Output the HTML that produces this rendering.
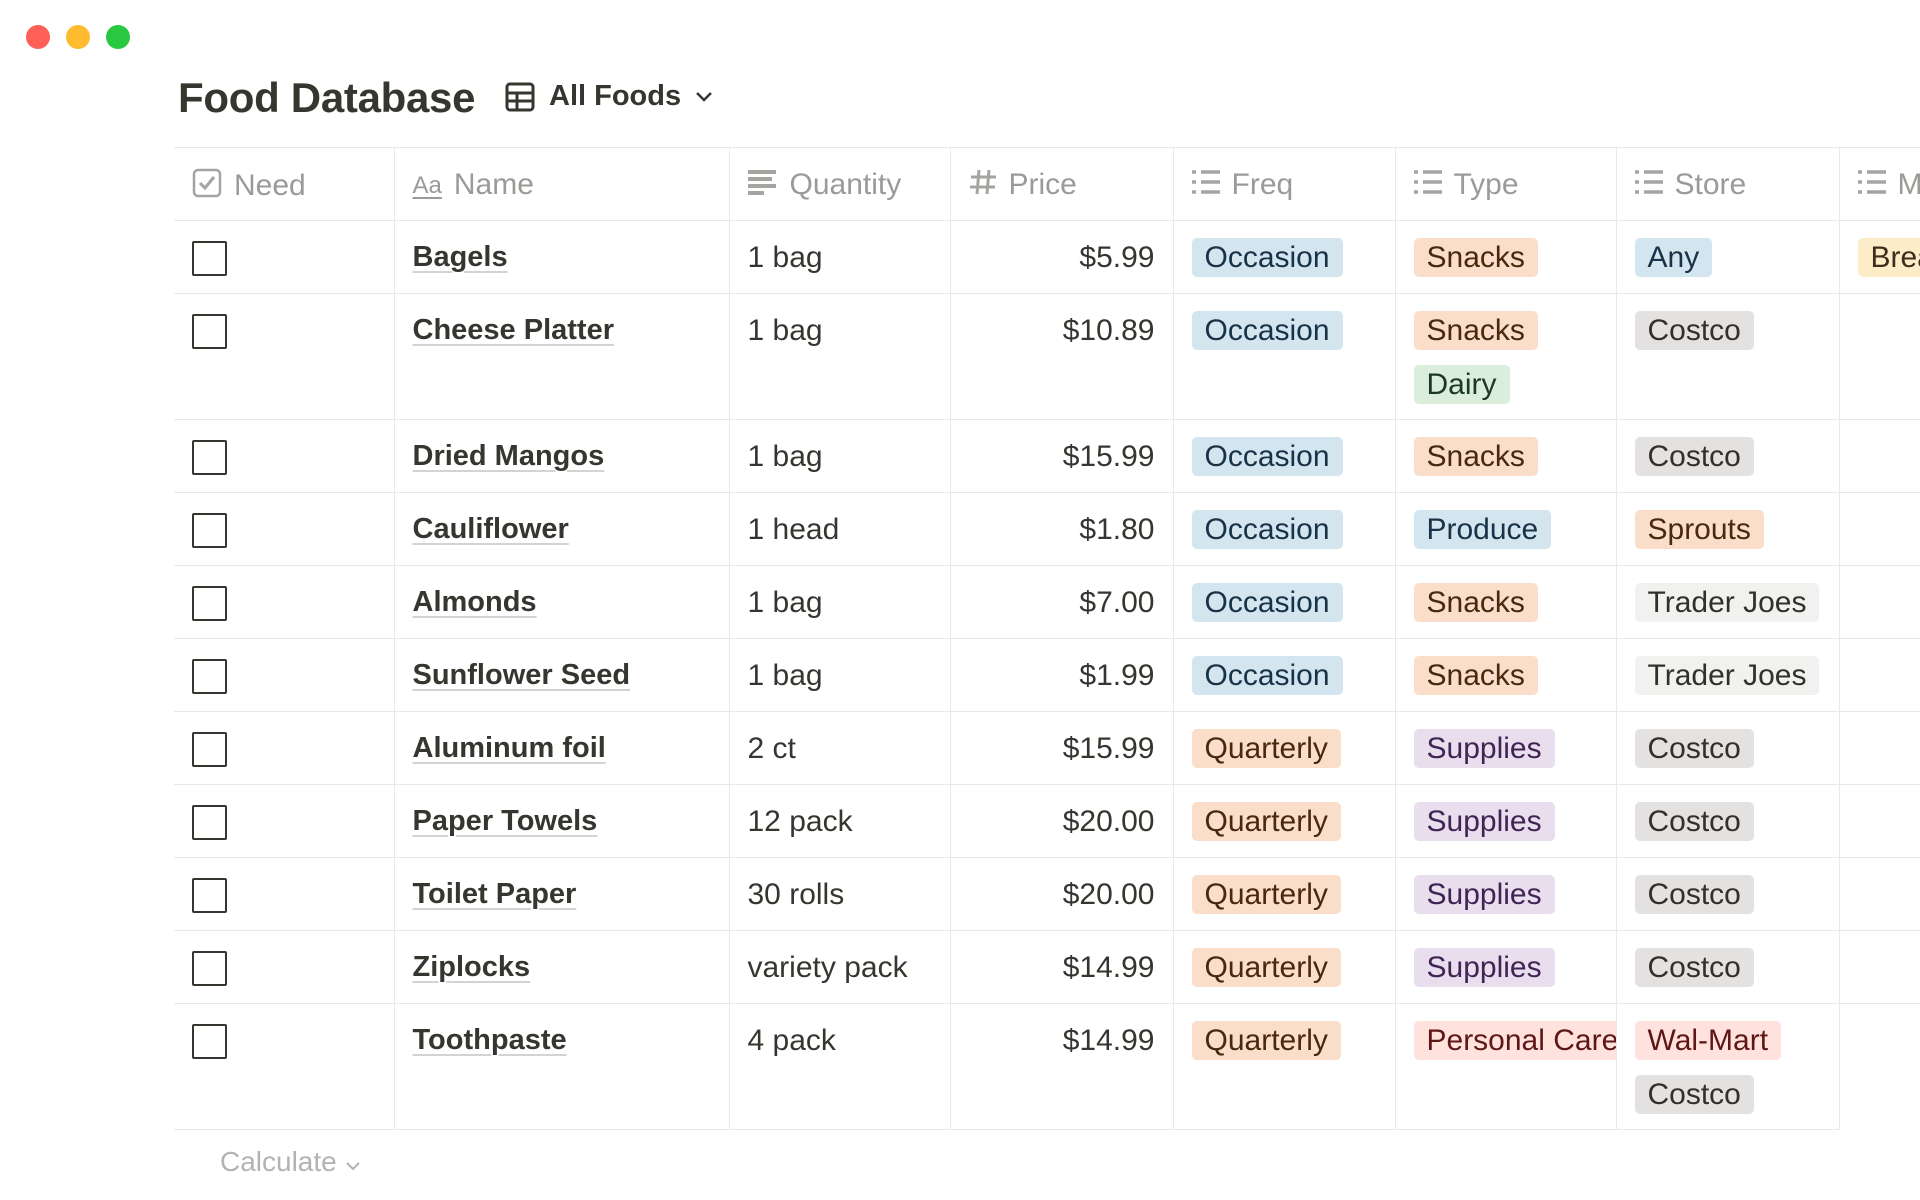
<!DOCTYPE html>
<html><head><meta charset="utf-8"><style>
*{box-sizing:border-box;margin:0;padding:0}
body{width:1920px;height:1200px;background:#fff;font-family:"Liberation Sans",Arial,sans-serif;color:#37352f;overflow:hidden;position:relative}
.dot{position:absolute;top:25px;width:24px;height:24px;border-radius:50%}
h1{position:absolute;left:178px;top:74px;font-size:42px;font-weight:bold;letter-spacing:-0.3px;color:#37352f}
.view{position:absolute;left:505px;top:80px;font-size:29px;font-weight:bold;display:flex;align-items:center;gap:14px}
table{position:absolute;left:174px;top:147px;border-collapse:collapse;table-layout:fixed;width:1746px}
td,th{border:1.5px solid #e9e9e7;vertical-align:top;font-weight:normal;text-align:left;font-size:30px;overflow:hidden;white-space:nowrap}
tr>*:first-child{border-left:none}
th{height:73px;color:#9b9a97;padding:20px 18px 0 18px}
th span.i{display:inline-block;vertical-align:middle;margin-right:12px}
td{height:73px;padding:17px 18px 0 18px}
td.t{line-height:39px}
tr.tall td{height:123px}
.cb{width:35px;height:35px;border:2.5px solid #37352f;border-radius:2px;margin-top:3px}
.nm{line-height:39px;font-size:29px;font-weight:bold;text-decoration:underline;text-decoration-color:#d3d3d1;text-decoration-thickness:2px;text-underline-offset:5px}
.pr{text-align:right;line-height:39px}
.p{display:inline-block;height:39px;line-height:39px;padding:0 13px;border-radius:5px;margin-bottom:15px;font-size:30px}
.bl{background:#d3e5ef;color:#183347}.or{background:#fadec9;color:#49290e}.gr{background:#dbeddb;color:#1c3829}
.gy{background:#e3e2e0;color:#32302c}.lg{background:#f1f1ef;color:#32302c}.pu{background:#e8deee;color:#412454}
.rd{background:#ffe2dd;color:#5d1715}.ye{background:#fdecc8;color:#402c1b}
.calc{position:absolute;left:220px;top:1146px;font-size:28px;color:#b4b3b0}
</style></head><body>
<div class="dot" style="left:26px;background:#fe5f57"></div>
<div class="dot" style="left:66px;background:#febc2e"></div>
<div class="dot" style="left:106px;background:#28c840"></div>
<h1>Food Database</h1>
<div class="view"><svg width="30" height="30" viewBox="0 0 30 30"><rect x="2" y="2" width="26" height="26" rx="3" fill="none" stroke="#37352f" stroke-width="3"/><path d="M2 11H28M2 19H28M12 11V28" stroke="#37352f" stroke-width="3"/></svg><span>All Foods</span><svg width="18" height="12" viewBox="0 0 18 12"><path d="M2 2L9 9L16 2" fill="none" stroke="#37352f" stroke-width="2.5"/></svg></div>
<table>
<colgroup><col style="width:220px"><col style="width:335px"><col style="width:221px"><col style="width:223px"><col style="width:222px"><col style="width:221px"><col style="width:223px"><col style="width:81px"></colgroup>
<tr>
<th><span class="i"><svg width="30" height="30" viewBox="0 0 30 30"><rect x="2" y="2" width="26" height="26" rx="4" fill="none" stroke="#a5a4a1" stroke-width="2.5"/><path d="M8 15L13 20L22 9" fill="none" stroke="#a5a4a1" stroke-width="3"/></svg></span>Need</th>
<th><span class="i" style="font-size:24px;text-decoration:underline;text-underline-offset:4px">Aa</span>Name</th>
<th><span class="i"><svg width="30" height="26" viewBox="0 0 30 26"><path d="M0 3H28M0 10H24M0 17H28M0 24H16" stroke="#a5a4a1" stroke-width="4"/></svg></span>Quantity</th>
<th><span class="i"><svg width="28" height="28" viewBox="0 0 28 28"><path d="M10 2L8 26M20 2L18 26M2 9H27M1 19H26" stroke="#a5a4a1" stroke-width="3"/></svg></span>Price</th>
<th><span class="i"><svg width="28" height="26" viewBox="0 0 28 26"><path d="M0 3H4M0 13H4M0 23H4M9 3H28M9 13H28M9 23H28" stroke="#a5a4a1" stroke-width="3.5"/></svg></span>Freq</th>
<th><span class="i"><svg width="28" height="26" viewBox="0 0 28 26"><path d="M0 3H4M0 13H4M0 23H4M9 3H28M9 13H28M9 23H28" stroke="#a5a4a1" stroke-width="3.5"/></svg></span>Type</th>
<th><span class="i"><svg width="28" height="26" viewBox="0 0 28 26"><path d="M0 3H4M0 13H4M0 23H4M9 3H28M9 13H28M9 23H28" stroke="#a5a4a1" stroke-width="3.5"/></svg></span>Store</th>
<th style="border-right:none"><span class="i"><svg width="28" height="26" viewBox="0 0 28 26"><path d="M0 3H4M0 13H4M0 23H4M9 3H28M9 13H28M9 23H28" stroke="#a5a4a1" stroke-width="3.5"/></svg></span>M</th>
</tr>
<tr><td><div class="cb"></div></td><td><span class="nm">Bagels</span></td><td class="t">1 bag</td><td class="pr">$5.99</td><td><span class="p bl">Occasion</span></td><td><span class="p or">Snacks</span></td><td><span class="p bl">Any</span></td><td style="border-right:none;padding-right:0"><span class="p ye">Breakfast</span></td></tr>
<tr class="tall"><td><div class="cb"></div></td><td><span class="nm">Cheese Platter</span></td><td class="t">1 bag</td><td class="pr">$10.89</td><td><span class="p bl">Occasion</span></td><td><span class="p or">Snacks</span><br><span class="p gr">Dairy</span></td><td><span class="p gy">Costco</span></td><td style="border-right:none"></td></tr>
<tr><td><div class="cb"></div></td><td><span class="nm">Dried Mangos</span></td><td class="t">1 bag</td><td class="pr">$15.99</td><td><span class="p bl">Occasion</span></td><td><span class="p or">Snacks</span></td><td><span class="p gy">Costco</span></td><td style="border-right:none"></td></tr>
<tr><td><div class="cb"></div></td><td><span class="nm">Cauliflower</span></td><td class="t">1 head</td><td class="pr">$1.80</td><td><span class="p bl">Occasion</span></td><td><span class="p bl">Produce</span></td><td><span class="p or">Sprouts</span></td><td style="border-right:none"></td></tr>
<tr><td><div class="cb"></div></td><td><span class="nm">Almonds</span></td><td class="t">1 bag</td><td class="pr">$7.00</td><td><span class="p bl">Occasion</span></td><td><span class="p or">Snacks</span></td><td><span class="p lg">Trader Joes</span></td><td style="border-right:none"></td></tr>
<tr><td><div class="cb"></div></td><td><span class="nm">Sunflower Seed</span></td><td class="t">1 bag</td><td class="pr">$1.99</td><td><span class="p bl">Occasion</span></td><td><span class="p or">Snacks</span></td><td><span class="p lg">Trader Joes</span></td><td style="border-right:none"></td></tr>
<tr><td><div class="cb"></div></td><td><span class="nm">Aluminum foil</span></td><td class="t">2 ct</td><td class="pr">$15.99</td><td><span class="p or">Quarterly</span></td><td><span class="p pu">Supplies</span></td><td><span class="p gy">Costco</span></td><td style="border-right:none"></td></tr>
<tr><td><div class="cb"></div></td><td><span class="nm">Paper Towels</span></td><td class="t">12 pack</td><td class="pr">$20.00</td><td><span class="p or">Quarterly</span></td><td><span class="p pu">Supplies</span></td><td><span class="p gy">Costco</span></td><td style="border-right:none"></td></tr>
<tr><td><div class="cb"></div></td><td><span class="nm">Toilet Paper</span></td><td class="t">30 rolls</td><td class="pr">$20.00</td><td><span class="p or">Quarterly</span></td><td><span class="p pu">Supplies</span></td><td><span class="p gy">Costco</span></td><td style="border-right:none"></td></tr>
<tr><td><div class="cb"></div></td><td><span class="nm">Ziplocks</span></td><td class="t">variety pack</td><td class="pr">$14.99</td><td><span class="p or">Quarterly</span></td><td><span class="p pu">Supplies</span></td><td><span class="p gy">Costco</span></td><td style="border-right:none"></td></tr>
<tr class="tall"><td><div class="cb"></div></td><td><span class="nm">Toothpaste</span></td><td class="t">4 pack</td><td class="pr">$14.99</td><td><span class="p or">Quarterly</span></td><td style="padding-right:0"><span class="p rd">Personal Care</span></td><td><span class="p rd">Wal-Mart</span><br><span class="p gy">Costco</span></td><td style="border:none;border-top:1.5px solid #e9e9e7;background:#fff"></td></tr>
</table>
<div class="calc">Calculate <svg width="16" height="10" viewBox="0 0 16 10"><path d="M2 2L8 8L14 2" fill="none" stroke="#b4b3b0" stroke-width="2"/></svg></div>
</body></html>
